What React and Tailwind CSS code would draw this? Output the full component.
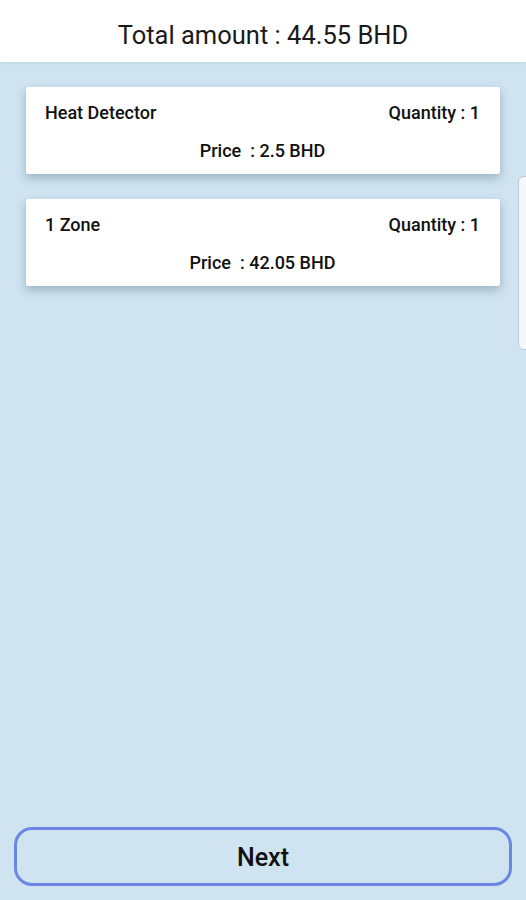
import React from 'react';

const items = [
  { name: 'Heat Detector', qty: 1, price: '2.5 BHD' },
  { name: '1 Zone', qty: 1, price: '42.05 BHD' },
];

function ItemCard({ item }) {
  return (
    <div className="bg-white rounded-[2px] shadow-[0_4px_10px_rgba(60,90,110,0.35)] h-[87px] pl-[19px] pr-[20px] pt-[15px] flex flex-col">
      <div className="flex justify-between items-center text-[18px] font-medium text-[#111] leading-[22px]">
        <span>{item.name}</span>
        <span>Quantity : {item.qty}</span>
      </div>
      <div className="text-center text-[18px] font-medium text-[#111] leading-[22px] mt-[16px]">
        Price&nbsp; : {item.price}
      </div>
    </div>
  );
}

export default function App() {
  return (
    <div className="w-[526px] h-[900px] flex flex-col bg-[#cfe3f0] relative overflow-hidden" style={{ fontFamily: 'Roboto, "Liberation Sans", sans-serif' }}>
      <header className="h-[62px] bg-white flex items-center justify-center shadow-[0_1px_3px_rgba(0,0,0,0.08)]">
        <h1 className="text-[25.5px] text-[#1a1a1a] pt-[8px]">Total amount : 44.55 BHD</h1>
      </header>

      <main className="flex-1 flex flex-col gap-[25px] px-[26px] pt-[25px]">
        {items.map((item) => (
          <ItemCard key={item.name} item={item} />
        ))}
      </main>

      {/* edge handle */}
      <div className="absolute right-[-10px] top-[176px] w-[18px] h-[174px] bg-[#f4f8fb] border border-[#b9cad6] rounded-[6px]" />

      <div className="px-[14px] pb-[14px]">
        <button className="w-full h-[59px] rounded-[18px] border-[3px] border-[#6c86e3] text-[25px] font-medium text-[#111] pt-[3px]">
          Next
        </button>
      </div>
    </div>
  );
}
